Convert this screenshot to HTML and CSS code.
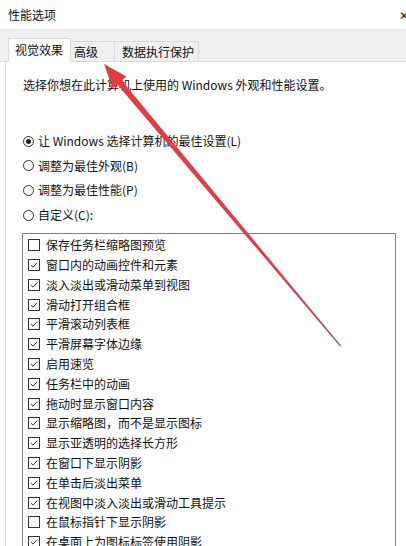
FILE: index.html
```html
<!DOCTYPE html>
<html lang="zh-CN">
<head>
<meta charset="utf-8">
<title>性能选项</title>
<link rel="stylesheet" href="styles.css">
</head>
<body>
<div class="window">
  <div class="titlebar">
    <span class="title">性能选项</span>
    <span class="close">✕</span>
  </div>
  <div class="tabstrip">
    <div class="tab tab-active">视觉效果</div>
    <div class="tab tab-adv">高级</div>
    <div class="tab tab-dep">数据执行保护</div>
  </div>
  <div class="panel">
    <p class="desc">选择你想在此计算机上使用的 Windows 外观和性能设置。</p>
    <div class="radios">
      <div class="radio-row"><span class="radio radio-on"></span><span>让 Windows 选择计算机的最佳设置(L)</span></div>
      <div class="radio-row"><span class="radio"></span><span>调整为最佳外观(B)</span></div>
      <div class="radio-row"><span class="radio"></span><span>调整为最佳性能(P)</span></div>
      <div class="radio-row"><span class="radio"></span><span>自定义(C):</span></div>
    </div>
    <div class="listbox">
      <div class="item"><span class="cb"></span><span>保存任务栏缩略图预览</span></div>
      <div class="item"><span class="cb"><svg viewBox="0 0 12 12"><polyline points="2.2,6 4.8,8.6 9.8,3.2"/></svg></span><span>窗口内的动画控件和元素</span></div>
      <div class="item"><span class="cb"><svg viewBox="0 0 12 12"><polyline points="2.2,6 4.8,8.6 9.8,3.2"/></svg></span><span>淡入淡出或滑动菜单到视图</span></div>
      <div class="item"><span class="cb"><svg viewBox="0 0 12 12"><polyline points="2.2,6 4.8,8.6 9.8,3.2"/></svg></span><span>滑动打开组合框</span></div>
      <div class="item"><span class="cb"><svg viewBox="0 0 12 12"><polyline points="2.2,6 4.8,8.6 9.8,3.2"/></svg></span><span>平滑滚动列表框</span></div>
      <div class="item"><span class="cb"><svg viewBox="0 0 12 12"><polyline points="2.2,6 4.8,8.6 9.8,3.2"/></svg></span><span>平滑屏幕字体边缘</span></div>
      <div class="item"><span class="cb"><svg viewBox="0 0 12 12"><polyline points="2.2,6 4.8,8.6 9.8,3.2"/></svg></span><span>启用速览</span></div>
      <div class="item"><span class="cb"><svg viewBox="0 0 12 12"><polyline points="2.2,6 4.8,8.6 9.8,3.2"/></svg></span><span>任务栏中的动画</span></div>
      <div class="item"><span class="cb"><svg viewBox="0 0 12 12"><polyline points="2.2,6 4.8,8.6 9.8,3.2"/></svg></span><span>拖动时显示窗口内容</span></div>
      <div class="item"><span class="cb"><svg viewBox="0 0 12 12"><polyline points="2.2,6 4.8,8.6 9.8,3.2"/></svg></span><span>显示缩略图，而不是显示图标</span></div>
      <div class="item"><span class="cb"><svg viewBox="0 0 12 12"><polyline points="2.2,6 4.8,8.6 9.8,3.2"/></svg></span><span>显示亚透明的选择长方形</span></div>
      <div class="item"><span class="cb"><svg viewBox="0 0 12 12"><polyline points="2.2,6 4.8,8.6 9.8,3.2"/></svg></span><span>在窗口下显示阴影</span></div>
      <div class="item"><span class="cb"><svg viewBox="0 0 12 12"><polyline points="2.2,6 4.8,8.6 9.8,3.2"/></svg></span><span>在单击后淡出菜单</span></div>
      <div class="item"><span class="cb"><svg viewBox="0 0 12 12"><polyline points="2.2,6 4.8,8.6 9.8,3.2"/></svg></span><span>在视图中淡入淡出或滑动工具提示</span></div>
      <div class="item"><span class="cb"></span><span>在鼠标指针下显示阴影</span></div>
      <div class="item"><span class="cb"><svg viewBox="0 0 12 12"><polyline points="2.2,6 4.8,8.6 9.8,3.2"/></svg></span><span>在桌面上为图标标签使用阴影</span></div>
    </div>
  </div>
  <svg class="arrow" viewBox="0 0 406 546" width="406" height="546">
    <defs>
      <linearGradient id="ag" gradientUnits="userSpaceOnUse" x1="104" y1="64" x2="341" y2="346">
        <stop offset="0" stop-color="#e23b3e"/>
        <stop offset="0.75" stop-color="#d8414a"/>
        <stop offset="1" stop-color="#9a5a6a"/>
      </linearGradient>
    </defs>
    <polygon fill="url(#ag)" points="104,64 126.3,76.6 121.7,80.5 341,345.6 340,346.4 117.1,84.3 112.5,88.2"/>
  </svg>
</div>
</body>
</html>
```
FILE: styles.css
```css
html, body {
  margin: 0;
  padding: 0;
  background: #ffffff;
}
body {
  font-family: "Noto Sans CJK SC", "Noto Sans", sans-serif;
  font-size: 12px;
  color: #111111;
  overflow: hidden;
}
.window {
  position: relative;
  width: 406px;
  height: 546px;
  overflow: hidden;
  background: #ffffff;
}
.titlebar {
  height: 29px;
  display: flex;
  align-items: center;
  justify-content: space-between;
  padding-left: 8px;
  background: #ffffff;
}
.title {
  font-size: 12px;
  line-height: 16px;
}
.close {
  font-size: 12px;
  line-height: 16px;
  margin-right: -3px;
  color: #222;
}
.tabstrip {
  height: 33px;
  background: #f0f0f0;
  border-top: 1px solid #e6e6e6;
  border-bottom: 1px solid #d9d9d9;
  box-sizing: border-box;
  display: flex;
  align-items: flex-end;
  padding-left: 8px;
}
.tab {
  box-sizing: border-box;
  height: 21px;
  line-height: 19px;
  border: 1px solid #d9d9d9;
  border-bottom: none;
  background: #f0f0f0;
  margin-bottom: -1px;
  border-bottom: 1px solid #d9d9d9;
  font-size: 12px;
}
.tab-active {
  width: 63px;
  height: 24px;
  line-height: 22px;
  padding-left: 6px;
  background: #ffffff;
  border-bottom: 1px solid #ffffff;
  position: relative;
  z-index: 1;
}
.tab-adv {
  width: 44px;
  padding-left: 3px;
  border-left: none;
}
.tab-dep {
  width: 84px;
  padding-left: 7px;
  border-left: none;
}
.panel {
  margin-left: 5px;
  border-left: 1px solid #dcdcdc;
  padding-left: 17px;
  padding-top: 15px;
  height: 500px;
  background: #ffffff;
}
.desc {
  margin: 0;
  line-height: 16px;
  height: 16px;
}
.radios {
  margin-top: 36px;
  display: flex;
  flex-direction: column;
}
.radio-row {
  height: 24.6px;
  display: flex;
  align-items: center;
  gap: 4px;
  line-height: 16px;
}
.radio {
  box-sizing: border-box;
  width: 11px;
  height: 11px;
  border: 1px solid #333333;
  border-radius: 50%;
  display: flex;
  align-items: center;
  justify-content: center;
  flex: none;
}
.radio-on::after {
  content: "";
  width: 5px;
  height: 5px;
  border-radius: 50%;
  background: #222222;
}
.listbox {
  margin-top: 6px;
  margin-left: -1px;
  width: 374px;
  box-sizing: border-box;
  border: 1px solid #828282;
  padding-top: 1px;
  padding-left: 5px;
  height: 330px;
}
.item {
  height: 19.8px;
  display: flex;
  align-items: center;
  gap: 6px;
  line-height: 16px;
  white-space: nowrap;
}
.cb {
  box-sizing: border-box;
  width: 12px;
  height: 12px;
  border: 1px solid #333333;
  flex: none;
  display: block;
}
.cb svg {
  display: block;
  width: 10px;
  height: 10px;
}
.cb polyline {
  fill: none;
  stroke: #222222;
  stroke-width: 1.1;
}
.arrow {
  position: absolute;
  left: 0;
  top: 0;
  pointer-events: none;
}
```
